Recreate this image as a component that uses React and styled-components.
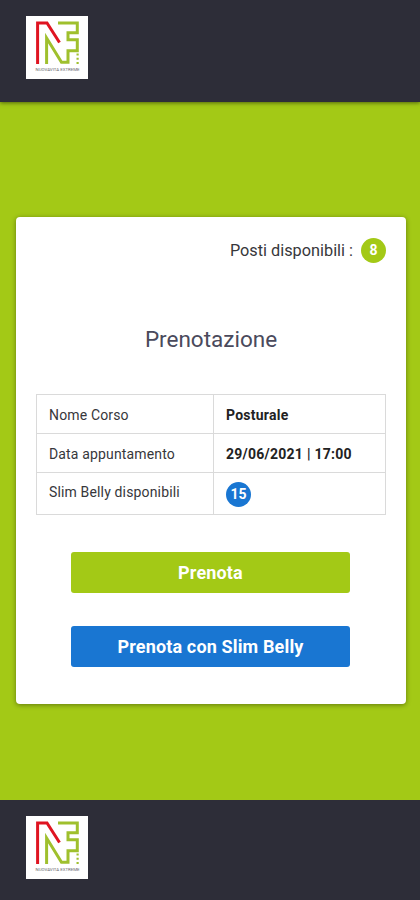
import React from "react";
import styled, { createGlobalStyle } from "styled-components";

const Logo = () => (
  <LogoBox viewBox="0 0 62 63">
    <rect width="62" height="63" fill="#fff" />
    <g fill="none" strokeWidth="3">
      <path stroke="#df1421" d="M11.6 48V7H21L33.5 26.5" />
      <path
        stroke="#9fc02d"
        d="M20.6 48V22L35.5 46.3H42V34.7H51.3V23.8H42V16.8H51.3V7H32"
      />
      <path
        stroke="#9fc02d"
        strokeWidth="2.2"
        strokeDasharray="2 2.2"
        d="M51.6 37.5V48.2"
      />
    </g>
    <text x="9.6" y="54.7" textLength="44" lengthAdjust="spacingAndGlyphs">
      NUOVAVITA EXTREME
    </text>
  </LogoBox>
);

const App = () => (
  <Page>
    <GlobalStyle />
    <Header>
      <Logo />
    </Header>
    <Main>
      <Card>
        <Places>
          Posti disponibili :<Badge>8</Badge>
        </Places>
        <Title>Prenotazione</Title>
        <Table>
          <tbody>
            <tr>
              <td>Nome Corso</td>
              <Value>Posturale</Value>
            </tr>
            <tr>
              <td>Data appuntamento</td>
              <Value>29/06/2021 | 17:00</Value>
            </tr>
            <tr>
              <td>Slim Belly disponibili</td>
              <Value>
                <Badge $color="#1976d2">15</Badge>
              </Value>
            </tr>
          </tbody>
        </Table>
        <Buttons>
          <Button>Prenota</Button>
          <Button $color="#1976d2">Prenota con Slim Belly</Button>
        </Buttons>
      </Card>
    </Main>
    <Footer>
      <Logo />
    </Footer>
  </Page>
);

export default App;

const GlobalStyle = createGlobalStyle`
  * {
    box-sizing: border-box;
  }

  body {
    margin: 0;
    font-family: Roboto, "Liberation Sans", sans-serif;
    color: #37373b;
  }
`;

const Page = styled.div`
  display: flex;
  flex-direction: column;
  height: 900px;
  background-color: #a3c916;
`;

const Header = styled.header`
  flex: none;
  height: 102px;
  padding: 16px 26px;
  background-color: #2d2d38;
  box-shadow: 0 1px 4px rgba(0, 0, 0, 0.5);
`;

const Footer = styled.footer`
  flex: none;
  height: 100px;
  padding: 16px 26px;
  background-color: #2d2d38;
`;

const LogoBox = styled.svg`
  display: block;
  width: 62px;
  height: 63px;

  text {
    font-family: Roboto, sans-serif;
    font-size: 4px;
    fill: #66666c;
  }
`;

const Main = styled.main`
  flex: 1;
  padding: 115px 14px 0 16px;
`;

const Card = styled.section`
  height: 487px;
  padding: 20px 20px 0;
  border-radius: 4px;
  background-color: #fff;
  box-shadow: 0 1px 5px rgba(0, 0, 0, 0.4);
`;

const Places = styled.div`
  display: flex;
  justify-content: flex-end;
  align-items: center;
  gap: 8px;
  height: 26px;
  font-size: 16.3px;
`;

const Badge = styled.span`
  display: inline-flex;
  justify-content: center;
  align-items: center;
  width: 25px;
  height: 25px;
  border-radius: 50%;
  background-color: ${(props) => props.$color || "#a3c916"};
  color: #fff;
  font-size: 14px;
  font-weight: 700;
  letter-spacing: 0;
`;

const Title = styled.h1`
  margin: 62px 0 0;
  font-size: 22.5px;
  font-weight: 400;
  line-height: 28px;
  text-align: center;
  color: #4a4a5c;
`;

const Table = styled.table`
  width: 350px;
  margin-top: 41px;
  border-collapse: collapse;
  table-layout: fixed;
  font-size: 14px;
  letter-spacing: 0.15px;

  td {
    height: 39px;
    padding: 1px 12px 0;
    border: 1px solid #dadada;
  }

  td:first-child {
    width: 177px;
  }

  tr:last-child td {
    height: 42px;
  }

  tr:last-child td:first-child {
    padding-bottom: 4px;
  }
`;

const Value = styled.td`
  font-weight: 700;
  letter-spacing: 0.25px;
  color: #222;
`;

const Buttons = styled.div`
  display: flex;
  flex-direction: column;
  gap: 33px;
  margin: 37px 36px 0 35px;
`;

const Button = styled.button`
  height: 41px;
  padding: 0;
  border: none;
  border-radius: 3px;
  background-color: ${(props) => props.$color || "#a3c916"};
  color: #fff;
  font-family: inherit;
  font-size: 18px;
  font-weight: 700;
  letter-spacing: 0.15px;
`;
